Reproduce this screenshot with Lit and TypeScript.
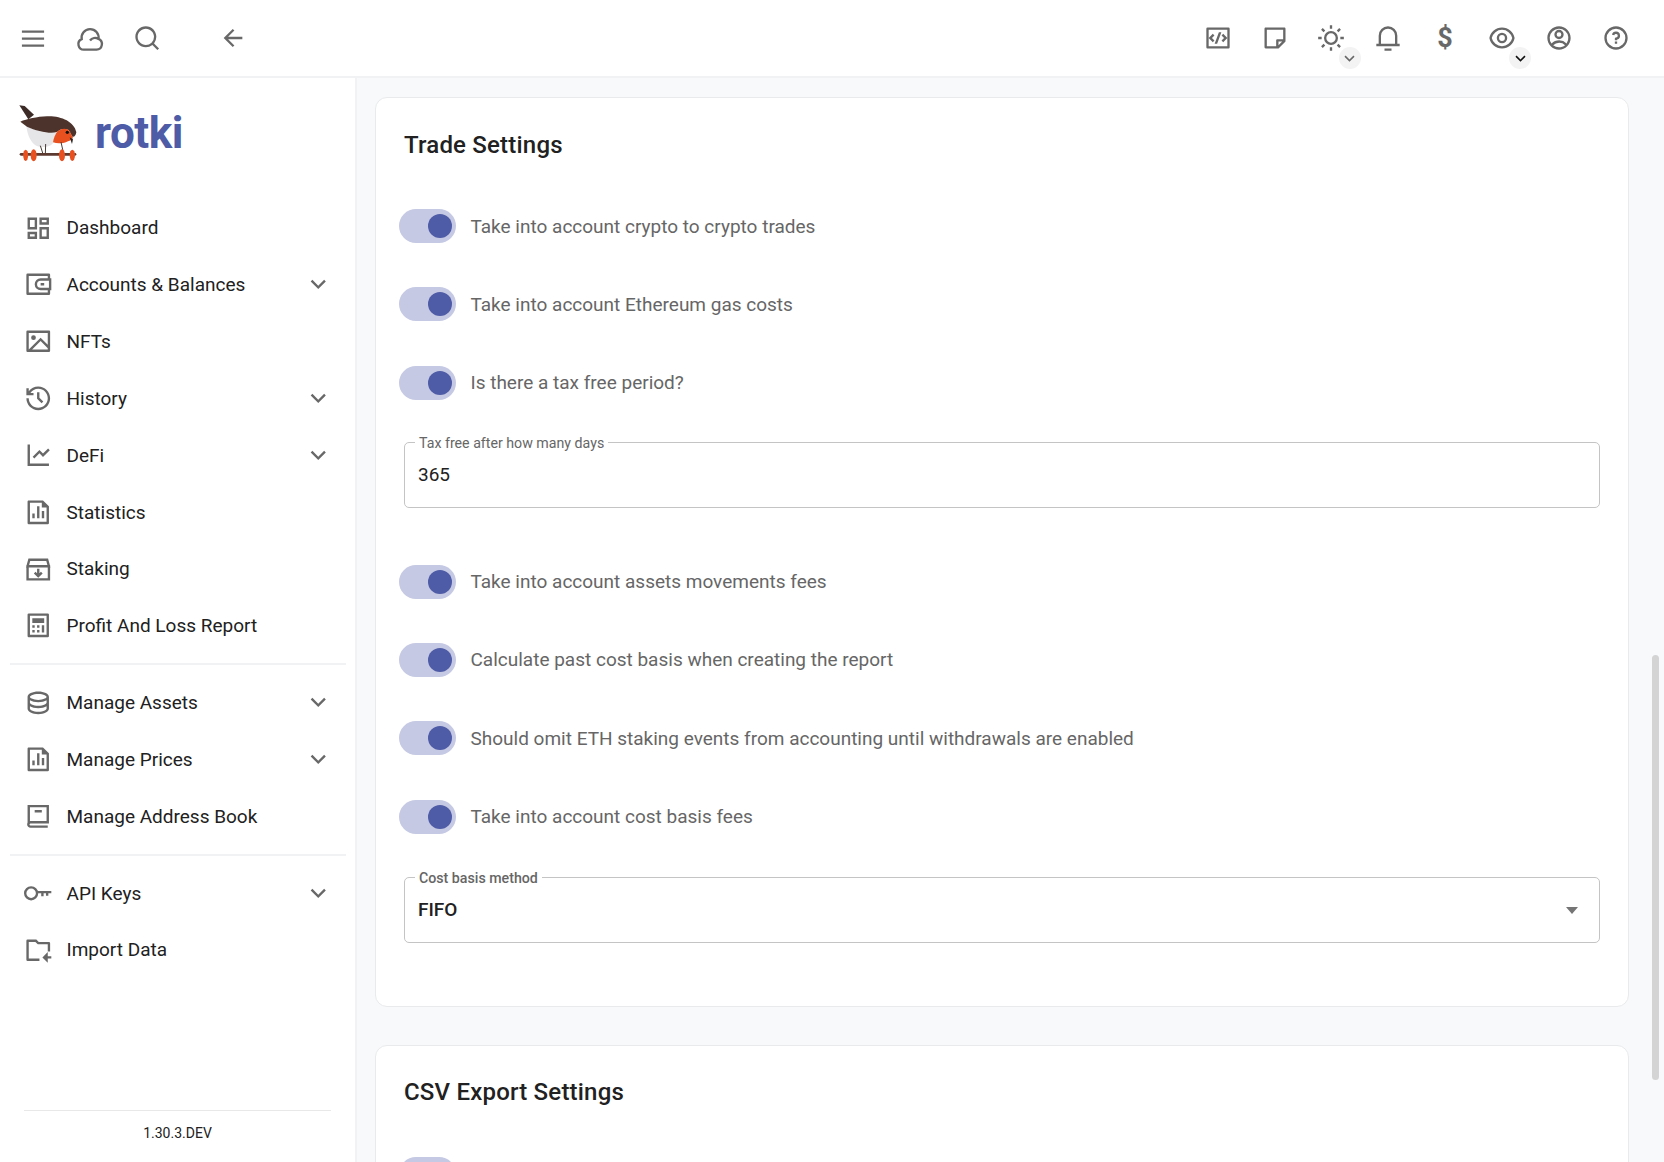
import { LitElement, html, css, svg } from "lit";
import { customElement } from "lit/decorators.js";

const paths: Record<string, string> = {
  dashboard: "M13 21V11h8v10h-8zM3 13V3h8v10H3zm6-2V5H5v6h4zM3 21v-6h8v6H3zm2-2h4v-2H5v2zm10 0h4v-6h-4v6zM13 3h8v6h-8V3zm2 2v2h4V5h-4z",
  wallet: "M22 7h1v10h-1v3a1 1 0 0 1-1 1H3a1 1 0 0 1-1-1V4a1 1 0 0 1 1-1h18a1 1 0 0 1 1 1v3zm-2 10h-6a5 5 0 0 1 0-10h6V5H4v14h16v-2zm1-2V9h-7a3 3 0 0 0 0 6h7zm-7-4h3v2h-3v-2z",
  image: "M4.828 21l-.02.02-.021-.02H2.992A.993.993 0 0 1 2 20.007V3.993A1 1 0 0 1 2.992 3h18.016c.548 0 .992.445.992.993v16.014a1 1 0 0 1-.992.993H4.828zM20 15V5H4v14L14 9l6 6zm0 2.828l-6-6L6.828 19H20v-1.172zM8 11a2 2 0 1 1 0-4 2 2 0 0 1 0 4z",
  history: "M12 2c5.523 0 10 4.477 10 10s-4.477 10-10 10S2 17.523 2 12h2c0 4.418 3.582 8 8 8s8-3.582 8-8-3.582-8-8-8C9.25 4 6.824 5.387 5.385 7.5H8v2H2v-6h2V6c1.824-2.43 4.729-4 8-4zm1 5v4.585l3.243 3.243-1.415 1.415L11 12.413V7h2z",
  chart: "M5 3v16h16v2H3V3h2zm15.293 3.293l1.414 1.414L16 13.414l-3-2.999-4.293 4.292-1.414-1.414L13 7.586l3 2.999 4.293-4.292z",
  file: "M11 7h2v10h-2V7zm4 4h2v6h-2v-6zm-8 2h2v4H7v-4zm8-9H5v16h14V8h-4V4zM3 2.992C3 2.444 3.447 2 3.999 2H16l5 5v13.993A1 1 0 0 1 20.007 22H3.993A1 1 0 0 1 3 21.008V2.992z",
  calc: "M4 2h16a1 1 0 0 1 1 1v18a1 1 0 0 1-1 1H4a1 1 0 0 1-1-1V3a1 1 0 0 1 1-1zm1 2v16h14V4H5zm2 2h10v4H7V6zm0 6h2v2H7v-2zm0 4h2v2H7v-2zm4-4h2v2h-2v-2zm0 4h2v2h-2v-2zm4-4h2v6h-2v-6z",
  database: "M5 12.5c0 .313.461.858 1.53 1.393C7.914 14.585 9.877 15 12 15c2.123 0 4.086-.415 5.47-1.107 1.069-.535 1.53-1.08 1.53-1.393v-2.171C17.35 11.349 14.827 12 12 12s-5.35-.652-7-1.671V12.5zm14 2.829C17.35 16.349 14.827 17 12 17s-5.35-.652-7-1.671V17.5c0 .313.461.858 1.53 1.393C7.914 19.585 9.877 20 12 20c2.123 0 4.086-.415 5.47-1.107 1.069-.535 1.53-1.08 1.53-1.393v-2.171zM3 17.5v-10C3 5.015 7.03 3 12 3s9 2.015 9 4.5v10c0 2.485-4.03 4.5-9 4.5s-9-2.015-9-4.5zm9-7.5c2.123 0 4.086-.415 5.47-1.107C18.539 8.358 19 7.813 19 7.5c0-.313-.461-.858-1.53-1.393C16.086 5.415 14.123 5 12 5c-2.123 0-4.086.415-5.47 1.107C5.461 6.642 5 7.187 5 7.5c0 .313.461.858 1.53 1.393C7.914 9.585 9.877 10 12 10z",
  folder: "M22 13h-2V7h-8.414l-2-2H4v14h9v2H3a1 1 0 0 1-1-1V4a1 1 0 0 1 1-1h7.414l2 2H21a1 1 0 0 1 1 1v7zm-2 4h3v2h-3v3.5L15.5 18 20 13.500V17z",
  code: "M3 3h18a1 1 0 0 1 1 1v16a1 1 0 0 1-1 1H3a1 1 0 0 1-1-1V4a1 1 0 0 1 1-1zm1 2v14h16V5H4zm16 7l-3.536 3.536-1.414-1.415L17.172 12 15.05 9.879l1.414-1.415L20 12zM6.828 12l2.122 2.121-1.414 1.415L4 12l3.536-3.536L8.95 9.88 6.828 12zm4.416 5H9.116l3.64-10h2.128l-3.64 10z",
  note: "M21 15l-6 5.996L4.002 21A.998.998 0 0 1 3 20.007V3.993C3 3.445 3.445 3 3.993 3h16.014c.548 0 .993.445.993.993V15zM19 5H5v14h8v-5a1 1 0 0 1 .883-.993L14 13l5-.001V5zm-.829 9.999L15 15v3.169l3.171-3.17z",
  sun: "M12 18a6 6 0 1 1 0-12 6 6 0 0 1 0 12zm0-2a4 4 0 1 0 0-8 4 4 0 0 0 0 8zM11 1h2v3h-2V1zm0 19h2v3h-2v-3zM3.515 4.929l1.414-1.414L7.05 5.636 5.636 7.05 3.515 4.93zM16.95 18.364l1.414-1.414 2.121 2.121-1.414 1.414-2.121-2.121zm2.121-14.85l1.414 1.415-2.121 2.121-1.414-1.414 2.121-2.121zM5.636 16.95l1.414 1.414-2.121 2.121-1.414-1.414 2.121-2.121zM23 11v2h-3v-2h3zM4 11v2H1v-2h3z",
  bell: "M20 17h2v2H2v-2h2v-7a8 8 0 1 1 16 0v7zm-2 0v-7a6 6 0 1 0-12 0v7h12zm-9 4h6v2H9v-2z",
  eye: "M12 3c5.392 0 9.878 3.88 10.819 9-.94 5.12-5.427 9-10.819 9-5.392 0-9.878-3.88-10.819-9C2.121 6.88 6.608 3 12 3zm0 16a9.005 9.005 0 0 0 8.777-7 9.005 9.005 0 0 0-17.554 0A9.005 9.005 0 0 0 12 19zm0-2.5a4.5 4.5 0 1 1 0-9 4.5 4.5 0 0 1 0 9zm0-2a2.5 2.5 0 1 0 0-5 2.5 2.5 0 0 0 0 5z",
  account: "M12 22C6.477 22 2 17.523 2 12S6.477 2 12 2s10 4.477 10 10-4.477 10-10 10zm-4.987-3.744A7.966 7.966 0 0 0 12 20c1.97 0 3.773-.712 5.167-1.892A6.979 6.979 0 0 0 12.16 16a6.981 6.981 0 0 0-5.147 2.256zM5.616 16.82A8.975 8.975 0 0 1 12.16 14a8.972 8.972 0 0 1 6.362 2.634 8 8 0 1 0-12.906.187zM12 13a4 4 0 1 1 0-8 4 4 0 0 1 0 8zm0-2a2 2 0 1 0 0-4 2 2 0 0 0 0 4z",
  question: "M12 22C6.477 22 2 17.523 2 12S6.477 2 12 2s10 4.477 10 10-4.477 10-10 10zm0-2a8 8 0 1 0 0-16 8 8 0 0 0 0 16zm-1-5h2v2h-2v-2zm2-1.645V14h-2v-1.500a1 1 0 0 1 1-1 1.5 1.5 0 1 0-1.471-1.794l-1.962-.393A3.501 3.501 0 1 1 13 13.355z",
  back: "M7.828 11H20v2H7.828l5.364 5.364-1.414 1.414L4 12l7.778-7.778 1.414 1.414z",
  search: "M18.031 16.617l4.283 4.282-1.415 1.415-4.282-4.283A8.96 8.96 0 0 1 11 20c-4.968 0-9-4.032-9-9s4.032-9 9-9 9 4.032 9 9a8.96 8.96 0 0 1-1.969 5.617zm-2.006-.742A6.977 6.977 0 0 0 18 11c0-3.868-3.133-7-7-7-3.868 0-7 3.132-7 7 0 3.867 3.132 7 7 7a6.977 6.977 0 0 0 4.875-1.975l.15-.15z",
  chevron: "M12 13.172l4.95-4.95 1.414 1.414L12 16 5.636 9.636 7.05 8.222z",
  menu: "M2.500 5.500h19v2h-19zM2.500 11.500h19v2h-19zM2.500 17.500h19v2h-19z",
};

// the few icons drawn as strokes instead of a filled outline
const strokes: Record<string, string> = {
  cloud: "M7 22H17.600a4.800 4.800 0 0 0 1.700-9.200A7.300 7.300 0 1 0 4.900 13 4.700 4.700 0 0 0 7 22zM12 14.200a5.500 5.500 0 0 1 7.300-1.400",
  staking: "M3 9.500h18V20.500H3zM4.500 4h15L21 9.500H3zM12 11.500v6M9 14.800l3 3 3-3",
  book: "M4 18.500V3.500h16V17H5.500a1.800 1.800 0 0 0 0 3.700H20M9 7.800h6",
  key: "M1 12a5 5 0 1 0 10 0 5 5 0 1 0-10 0zM11 11h12M15.500 11v3.500M19.500 11v3",
};

function icon(name: string) {
  const stroke = strokes[name];
  return html`<svg class="icon" viewBox="0 0 24 24">
    ${stroke
      ? svg`<path d=${stroke} fill="none" stroke="currentColor" stroke-width="2"></path>`
      : svg`<path d=${paths[name]} fill="currentColor"></path>`}
  </svg>`;
}

const navGroups = [
  [
    { label: "Dashboard", icon: "dashboard" },
    { label: "Accounts & Balances", icon: "wallet", more: true },
    { label: "NFTs", icon: "image" },
    { label: "History", icon: "history", more: true },
    { label: "DeFi", icon: "chart", more: true },
    { label: "Statistics", icon: "file" },
    { label: "Staking", icon: "staking" },
    { label: "Profit And Loss Report", icon: "calc" },
  ],
  [
    { label: "Manage Assets", icon: "database", more: true },
    { label: "Manage Prices", icon: "file", more: true },
    { label: "Manage Address Book", icon: "book" },
  ],
  [
    { label: "API Keys", icon: "key", more: true },
    { label: "Import Data", icon: "folder" },
  ],
];

@customElement("app-root")
export class AppRoot extends LitElement {
  static styles = css`
    :host {
      display: block;
      height: 1162px;
      overflow: hidden;
      font-family: Roboto, "Noto Sans", sans-serif;
      color: #212121;
      background: #fff;
    }
    * {
      box-sizing: border-box;
    }
    .icon {
      width: 28px;
      height: 28px;
      flex: none;
      display: block;
      color: #686868;
    }
    .topbar {
      height: 78px;
      display: flex;
      align-items: center;
      padding: 0 20px 0 4.5px;
      border-bottom: 2px solid #f1f2f4;
    }
    .icon-btn {
      width: 56.85px;
      height: 40px;
      display: flex;
      align-items: center;
      justify-content: center;
      position: relative;
      color: #686868;
    }
    .back {
      margin-left: 29.5px;
    }
    .spacer {
      flex: 1;
    }
    .dollar {
      font-size: 27px;
      font-weight: 700;
      line-height: 1;
      color: #686868;
    }
    .badge {
      position: absolute;
      left: 36px;
      top: 29px;
      width: 22px;
      height: 22px;
      border-radius: 50%;
      background: #f3f3f3;
      display: flex;
      align-items: center;
      justify-content: center;
    }
    .badge .icon {
      width: 19px;
      height: 19px;
    }
    .badge.dark .icon {
      color: #111;
    }
    .body {
      display: flex;
      height: 1084px;
    }
    .sidebar {
      width: 357px;
      flex: none;
      border-right: 2px solid #f1f2f4;
      display: flex;
      flex-direction: column;
    }
    .logo {
      height: 121.4px;
      flex: none;
      display: flex;
      align-items: center;
      padding: 0 0 11px 17px;
      gap: 17px;
    }
    .bird {
      width: 61px;
      height: 59px;
      flex: none;
    }
    .logo-text {
      font-size: 44px;
      font-weight: 700;
      color: #4e5ba6;
      letter-spacing: -0.5px;
    }
    .nav-item {
      height: 56.85px;
      flex: none;
      display: flex;
      align-items: center;
      padding: 0 23px 0 24px;
      font-size: 19px;
    }
    .nav-item .icon {
      width: 28.5px;
      height: 28.5px;
    }
    .nav-item .label {
      flex: 1;
      margin-left: 14px;
    }
    .divider {
      height: 2px;
      flex: none;
      background: #f1f2f4;
      margin: 9px 9px 9px 10px;
    }
    .version {
      margin: auto 24px 8px;
      height: 44px;
      flex: none;
      border-top: 1px solid #e8e8e8;
      display: flex;
      align-items: center;
      justify-content: center;
      font-size: 14px;
    }
    .main {
      flex: 1;
      background: #f8f9fb;
      padding: 19px 35px 0 18px;
      overflow: hidden;
      position: relative;
    }
    .card {
      background: #fff;
      border: 1px solid #e9eaec;
      border-radius: 12px;
      padding: 0 28px;
      margin-bottom: 38px;
    }
    .card-title {
      height: 89px;
      display: flex;
      align-items: center;
      font-size: 24px;
      font-weight: 500;
      letter-spacing: 0.2px;
      padding-top: 4.4px;
    }
    .toggle-row {
      height: 78.3px;
      margin-left: -5px;
      display: flex;
      align-items: center;
      gap: 14.5px;
      font-size: 19px;
      color: #666;
    }
    .track {
      width: 57px;
      height: 34px;
      border-radius: 17px;
      background: #c5c9e3;
      display: flex;
      align-items: center;
      justify-content: flex-end;
      padding-right: 4px;
      flex: none;
    }
    .knob {
      width: 24px;
      height: 24px;
      border-radius: 50%;
      background: #4e5ba6;
    }
    .field {
      height: 66px;
      border: 1px solid #c4c4c4;
      border-radius: 5px;
      position: relative;
      display: flex;
      align-items: center;
      padding: 0 13px 1px;
      font-size: 19px;
    }
    .field-label {
      position: absolute;
      left: 10px;
      top: -7.5px;
      padding: 0 4px;
      background: #fff;
      font-size: 14.2px;
      line-height: 16px;
      color: #666;
    }
    .field.days {
      margin: 20px 0 34.6px;
    }
    .field.method {
      margin: 21px 0 63px;
      font-weight: 500;
      justify-content: space-between;
    }
    .caret {
      width: 0;
      height: 0;
      border-left: 6px solid transparent;
      border-right: 6px solid transparent;
      border-top: 7px solid #757575;
      margin: 2px 8.5px 0 0;
    }
    .thumb {
      position: absolute;
      right: 5px;
      top: 577px;
      width: 7px;
      height: 425px;
      border-radius: 4px;
      background: #d4d4d4;
    }
  `;

  renderTop(name: string, badge = "") {
    return html`<div class="icon-btn">
      ${icon(name)}
      ${badge ? html`<span class="badge ${badge}">${icon("chevron")}</span>` : ""}
    </div>`;
  }

  renderBird() {
    return html`<svg class="bird" viewBox="50 40 183 177">
      <path d="M57 44 L73 46 L101 72 L84 86 Z" fill="#3c2a26"></path>
      <path d="M78 104 C95 120 150 132 172 124 L158 157 C150 170 118 174 103 162 C88 150 80 128 78 104 Z" fill="#e6e6e8"></path>
      <path d="M60 93 C80 85 110 78 140 77 C180 75 222 92 228 125 C226 135 222 140 216 138 L205 118 C190 112 180 116 170 124 C150 130 110 122 80 108 Z" fill="#4c332c"></path>
      <path d="M172 122 C185 112 200 112 208 122 L218 142 C205 155 180 162 158 155 C160 142 165 130 172 122 Z" fill="#e8501f"></path>
      <circle cx="201" cy="125" r="5" fill="#111"></circle>
      <path d="M208 140 L218 146 L215 160 Z" fill="#2b2320"></path>
      <path d="M120 165 L128 190 M136 160 L135 190 M182 154 L190 190" stroke="#4a3a34" stroke-width="3" fill="none"></path>
      <rect x="58" y="187" width="170" height="8" rx="4" fill="#5c3a30"></rect>
      <ellipse cx="76" cy="194" rx="7.500" ry="17" fill="#e8501f"></ellipse>
      <ellipse cx="100" cy="194" rx="9" ry="18" fill="#e8501f"></ellipse>
      <ellipse cx="185" cy="194" rx="9" ry="18" fill="#e8501f"></ellipse>
      <ellipse cx="216" cy="194" rx="8" ry="17" fill="#e8501f"></ellipse>
    </svg>`;
  }

  renderToggle(label: string) {
    return html`<div class="toggle-row">
      <span class="track"><span class="knob"></span></span>
      <span>${label}</span>
    </div>`;
  }

  render() {
    return html`
      <header class="topbar">
        ${this.renderTop("menu")}${this.renderTop("cloud")}${this.renderTop("search")}
        <div class="back">${this.renderTop("back")}</div>
        <div class="spacer"></div>
        ${this.renderTop("code")}${this.renderTop("note")}${this.renderTop("sun", "light")}${this.renderTop("bell")}
        <div class="icon-btn"><span class="dollar">$</span></div>
        ${this.renderTop("eye", "dark")}${this.renderTop("account")}${this.renderTop("question")}
      </header>
      <div class="body">
        <aside class="sidebar">
          <div class="logo">${this.renderBird()}<span class="logo-text">rotki</span></div>
          ${navGroups.map(
            (group, i) => html`
              ${i > 0 ? html`<div class="divider"></div>` : ""}
              ${group.map(
                (item) => html`<div class="nav-item">
                  ${icon(item.icon)}
                  <span class="label">${item.label}</span>
                  ${item.more ? html`<span>${icon("chevron")}</span>` : ""}
                </div>`,
              )}
            `,
          )}
          <div class="version">1.30.3.DEV</div>
        </aside>
        <main class="main">
          <section class="card">
            <div class="card-title">Trade Settings</div>
            ${this.renderToggle("Take into account crypto to crypto trades")}
            ${this.renderToggle("Take into account Ethereum gas costs")}
            ${this.renderToggle("Is there a tax free period?")}
            <div class="field days">
              <span class="field-label">Tax free after how many days</span>
              365
            </div>
            ${this.renderToggle("Take into account assets movements fees")}
            ${this.renderToggle("Calculate past cost basis when creating the report")}
            ${this.renderToggle("Should omit ETH staking events from accounting until withdrawals are enabled")}
            ${this.renderToggle("Take into account cost basis fees")}
            <div class="field method">
              <span class="field-label">Cost basis method</span>
              FIFO
              <span class="caret"></span>
            </div>
          </section>
          <section class="card">
            <div class="card-title">CSV Export Settings</div>
            ${this.renderToggle("")}
          </section>
          <div class="thumb"></div>
        </main>
      </div>
    `;
  }
}
